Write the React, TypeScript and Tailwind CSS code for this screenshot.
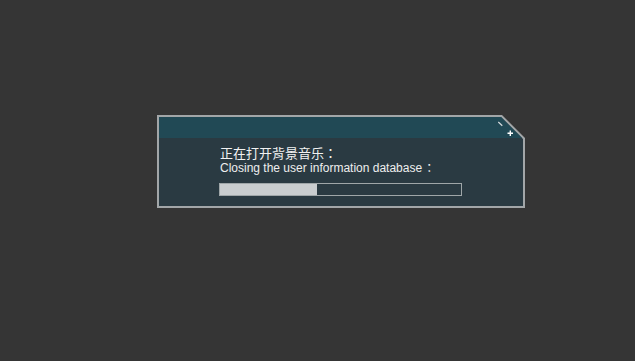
export default function App() {
  return (
    <div className="w-[635px] h-[361px] bg-[#353535] pt-[115px] pl-[157px]" style={{ fontFamily: '"Liberation Sans", Arial, "Noto Sans CJK SC", sans-serif' }}>
      <div className="relative w-[368px] h-[93px] bg-[#a2a6a8] p-[2px] [clip-path:polygon(0_0,calc(100%-23px)_0,100%_23px,100%_100%,0_100%)]">
        <div className="w-full h-full flex flex-col [clip-path:polygon(0_0,calc(100%-22px)_0,100%_22px,100%_100%,0_100%)] bg-[#2a3a42]">
          <div className="h-[21px] bg-[#214955] shrink-0" />
          <div className="flex flex-col pl-[61px] pt-[7px]">
            <div className="text-[13px] leading-[15px] text-[#f2f2f2]" style={{ fontFamily: '"Noto Sans CJK TC", sans-serif' }}>正在打开背景音乐：</div>
            <div className="text-[12px] leading-[14px] text-[#eeeeee] mt-[1px] flex items-center">
              <span>Closing the user information database</span>
              <span className="ml-[1px]" style={{ fontFamily: '"Noto Sans CJK TC", sans-serif' }}>：</span>
            </div>
            <div className="mt-[8px] -ml-[1px] w-[243px] h-[13px] border border-[#9fa6a8] flex">
              <div className="w-[97px] h-full bg-[#c9cdcf]" />
            </div>
          </div>
        </div>
        <svg className="absolute left-[339px] top-[5px]" width="20" height="20" viewBox="0 0 20 20">
          <line x1="2.3" y1="2" x2="6.3" y2="5.7" stroke="#d9dddf" strokeWidth="1.2" />
          <line x1="14.3" y1="10.5" x2="14.3" y2="16" stroke="#ffffff" strokeWidth="1.4" />
          <line x1="11.5" y1="13.3" x2="17" y2="13.3" stroke="#ffffff" strokeWidth="1.4" />
        </svg>
      </div>
    </div>
  );
}
